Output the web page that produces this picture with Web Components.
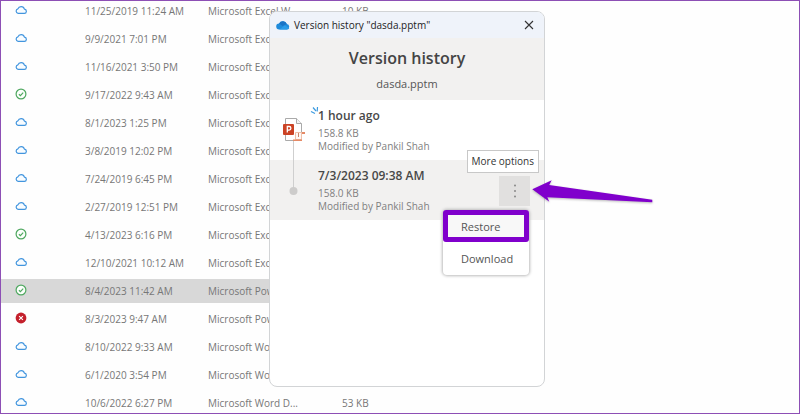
<!DOCTYPE html>
<html lang="en">
<head>
<meta charset="utf-8">
<title>Version history</title>
<style>
    body {
        margin: 0;
        background: #fefefe;
        font-family: "Open Sans", "Noto Sans", sans-serif;
    }
</style>
</head>
<body>
<desktop-view>
    <file-list></file-list>
    <version-dialog slot="window" file="dasda.pptm">
        <version-entry heading="1 hour ago" size="158.8 KB" author="Modified by Pankil Shah" marker="file"></version-entry>
        <version-entry heading="7/3/2023 09:38 AM" size="158.0 KB" author="Modified by Pankil Shah" marker="dot" active>
            <more-options></more-options>
        </version-entry>
    </version-dialog>
    <pointer-arrow slot="window"></pointer-arrow>
</desktop-view>

<script>
const ICONS = {
    cloud: `<svg viewBox="0 0 12 12" role="img" aria-label="Available online"><path d="M3.1 9.4h6a2.1 2.1 0 0 0 .3-4.2A3.4 3.4 0 0 0 2.9 4.900a2.3 2.3 0 0 0 .2 4.5z" fill="#f8fcff" stroke="#4295de" stroke-width="1.2" stroke-linejoin="round"/></svg>`,
    synced: `<svg viewBox="0 0 12 12" role="img" aria-label="Synced"><circle cx="6" cy="6" r="4.9" fill="#fbfffb" stroke="#4fa860" stroke-width="1.2"/><path d="M3.9 6.2l1.5 1.4L8.2 4.7" fill="none" stroke="#4fa860" stroke-width="1.2"/></svg>`,
    error: `<svg viewBox="0 0 12 12" role="img" aria-label="Sync error"><circle cx="6" cy="6" r="5.4" fill="#c4202c"/><path d="M4.1 4.1l3.8 3.8M7.9 4.1L4.1 7.9" stroke="#fff" stroke-width="1.1"/></svg>`
};

const MARKERS = {
    file: `<svg viewBox="0 0 48 60" aria-hidden="true">
        <path d="M23.5 41v19" stroke="#cfcfcf"/>
        <path d="M15.5 18.5h11l5 5v17h-16z" fill="#fff" stroke="#aaa"/>
        <path d="M26.5 18.5v5h5" fill="#f3f3f3" stroke="#aaa"/>
        <rect x="13" y="24" width="11" height="11" rx="1" fill="#cb4224"/>
        <path d="M17.3 32.5v-6h1.8a1.75 1.75 0 0 1 0 3.6h-1.8" fill="none" stroke="#fff" stroke-width="1.3"/>
        <path d="M25.5 32.5h6v7h-6z" fill="#fff8f4" stroke="#f0c0aa"/>
        <path d="M28.5 33v4" stroke="#c8866d"/>
        <path d="M32 32h3v2h-3zM23 39.500h9V41h-9z" fill="#e58a66"/>
        <path d="M47.500 7l-.3 4.500M43 7.500l3 3.500M41 11.500l4 2" stroke="#3d9be0" stroke-width="1.2"/>
    </svg>`,
    dot: `<svg viewBox="0 0 48 60" aria-hidden="true">
        <path d="M23.5 0v28" stroke="#cfcfcf"/>
        <circle cx="23.5" cy="31" r="4" fill="#cdcccb"/>
    </svg>`
};

const FILES = [
    ["cloud", "11/25/2019 11:24 AM", "Microsoft Excel W...", "10 KB"],
    ["cloud", "9/9/2021 7:01 PM", "Microsoft Excel W...", ""],
    ["cloud", "11/16/2021 3:50 PM", "Microsoft Excel W...", ""],
    ["synced", "9/17/2022 9:43 AM", "Microsoft Excel W...", ""],
    ["cloud", "8/1/2023 1:25 PM", "Microsoft Excel W...", ""],
    ["cloud", "3/8/2019 12:02 PM", "Microsoft Excel W...", ""],
    ["cloud", "7/24/2019 6:45 PM", "Microsoft Excel W...", ""],
    ["cloud", "2/27/2019 12:51 PM", "Microsoft Excel W...", ""],
    ["synced", "4/13/2023 6:16 PM", "Microsoft Excel W...", ""],
    ["cloud", "12/10/2021 10:12 AM", "Microsoft Excel W...", ""],
    ["synced", "8/4/2023 11:42 AM", "Microsoft Power...", ""],
    ["error", "8/3/2023 9:47 AM", "Microsoft Power...", ""],
    ["cloud", "8/10/2022 9:33 AM", "Microsoft Word D...", ""],
    ["cloud", "6/1/2020 3:54 PM", "Microsoft Word D...", ""],
    ["cloud", "10/6/2022 6:27 PM", "Microsoft Word D...", "53 KB"]
];
const SELECTED = 10;

class DesktopView extends HTMLElement {
    constructor() {
        super();
        this.attachShadow({ mode: "open" }).innerHTML = `
            <style>
                :host {
                    display: block;
                    position: relative;
                    box-sizing: border-box;
                    height: 100vh;
                    border: 1px solid #8d4fb5;
                    overflow: hidden;
                }
            </style>
            <slot></slot>
            <slot name="window"></slot>
        `;
    }
}

class FileList extends HTMLElement {
    constructor() {
        super();
        const rows = FILES.map(([icon, date, type, size], i) => `
            <tr${i === SELECTED ? ' class="selected"' : ""}>
                <td class="status">${ICONS[icon]}</td>
                <td>${date}</td>
                <td>${type}</td>
                <td>${size}</td>
            </tr>`).join("");
        this.attachShadow({ mode: "open" }).innerHTML = `
            <style>
                :host {
                    display: block;
                    margin-top: -6px;
                    color: #777;
                    font-size: 10px;
                    line-height: 16px;
                }
                table {
                    table-layout: fixed;
                    width: 50%;
                    border-spacing: 0 4px;
                }
                col.status { width: 84px; }
                col.date { width: 123px; }
                col.type { width: 134px; }
                tr { height: 24px; }
                td {
                    padding: 0;
                    white-space: nowrap;
                }
                td.status { padding: 0 0 2px 14px; }
                svg {
                    display: block;
                    width: 12px;
                    height: 12px;
                }
                .selected { background: #d8d8d8; }
            </style>
            <table>
                <colgroup><col class="status"><col class="date"><col class="type"><col></colgroup>
                <tbody>${rows}</tbody>
            </table>
        `;
    }
}

class VersionDialog extends HTMLElement {
    constructor() {
        super();
        const file = this.getAttribute("file") || "";
        this.attachShadow({ mode: "open" }).innerHTML = `
            <style>
                :host {
                    display: block;
                    position: absolute;
                    left: 268px;
                    top: 10px;
                    bottom: 26px;
                    width: 274px;
                    border: 1px solid #d2d4d6;
                    border-radius: 8px;
                    background: #fff;
                }
                .bar {
                    display: flex;
                    align-items: center;
                    gap: 4px;
                    height: 26px;
                    padding: 0 8px 0 6px;
                    border-radius: 7px 7px 0 0;
                    background: #eff3fa;
                    color: #222;
                    font-size: 10px;
                }
                .bar span { flex: 1; }
                .bar svg { display: block; }
                button {
                    padding: 0;
                    border: 0;
                    background: none;
                }
                header {
                    display: flex;
                    flex-direction: column;
                    align-items: center;
                    gap: 4px;
                    height: 54px;
                    padding-top: 8px;
                    background: #f2f1f0;
                    text-align: center;
                }
                h1 {
                    margin: 0;
                    color: #444;
                    font-size: 16px;
                    font-weight: 600;
                    line-height: 24px;
                }
                p {
                    margin: 0;
                    color: #555;
                    font-size: 11px;
                    line-height: 20px;
                }
            </style>
            <div class="bar">
                <svg width="14" height="10" viewBox="0 0 14 10" aria-hidden="true">
                    <path d="M3.3 9.5a3 3 0 0 1-.2-6A4.200 4.200 0 0 1 10.800 3.900a2.850 2.850 0 0 1 .2 5.600z" fill="#1f8bdb"/>
                    <path d="M3.1 3.5A4.200 4.200 0 0 1 10.800 3.900L6.5 6z" fill="#1a74c6"/>
                    <path d="M3.3 9.5L9 5.200l4.300 3.100a2.800 2.800 0 0 1-2.300 1.200z" fill="#2b9ce8"/>
                </svg>
                <span>Version history "${file}"</span>
                <button aria-label="Close">
                    <svg width="14" height="14" viewBox="0 0 14 14"><path d="M3 3l8 8M11 3l-8 8" stroke="#333" stroke-width="1.1"/></svg>
                </button>
            </div>
            <header>
                <h1>Version history</h1>
                <p>${file}</p>
            </header>
            <slot></slot>
        `;
    }
}

class VersionEntry extends HTMLElement {
    constructor() {
        super();
        this.attachShadow({ mode: "open" }).innerHTML = `
            <style>
                :host {
                    display: grid;
                    grid-template-columns: 48px 1fr auto;
                    min-height: 60px;
                }
                :host([active]) { background: #f2f1f0; }
                svg {
                    display: block;
                    width: 48px;
                    height: 60px;
                    overflow: visible;
                }
                .text {
                    padding: 7px 0;
                    color: #808080;
                    font-size: 10px;
                    line-height: 13px;
                }
                h2 {
                    margin: 0 0 2px;
                    color: #484848;
                    font-size: 12px;
                    font-weight: 600;
                    line-height: 18px;
                }
                p { margin: 0; }
            </style>
            ${MARKERS[this.getAttribute("marker")] || ""}
            <div class="text">
                <h2>${this.getAttribute("heading")}</h2>
                <p>${this.getAttribute("size")}</p>
                <p>${this.getAttribute("author")}</p>
            </div>
            <slot></slot>
        `;
    }
}

class MoreOptions extends HTMLElement {
    constructor() {
        super();
        this.attachShadow({ mode: "open" }).innerHTML = `
            <style>
                :host {
                    display: block;
                    position: relative;
                    padding: 16px 14px 0 0;
                }
                button {
                    display: block;
                    margin: 0;
                    border: 0;
                    padding: 0;
                    font: inherit;
                    color: inherit;
                }
                .trigger {
                    width: 31px;
                    height: 30px;
                    background: #e1e0df;
                }
                .trigger svg {
                    display: block;
                    margin: auto;
                }
                .tip {
                    position: absolute;
                    right: 5px;
                    bottom: 47px;
                    padding: 0 4px;
                    border: 1px solid #c8c8c8;
                    background: #fff;
                    color: #333;
                    font-size: 10px;
                    line-height: 21px;
                    white-space: nowrap;
                }
                .menu {
                    position: absolute;
                    top: 50px;
                    right: 15px;
                    width: 86px;
                    border-radius: 4px;
                    background: #fff;
                    box-shadow: 0 0 3px 1px #bbb;
                    color: #555;
                    font-size: 11px;
                }
                .menu button {
                    box-sizing: border-box;
                    width: 100%;
                    height: 33px;
                    padding-left: 18px;
                    border-radius: 4px;
                    background: none;
                    text-align: left;
                }
                .menu .marked {
                    height: 32px;
                    padding-left: 13px;
                    border: 5px solid #8000cc;
                    border-radius: 3px;
                    background: #f8f8f8;
                }
            </style>
            <button class="trigger" aria-label="More options" aria-haspopup="menu" aria-expanded="true">
                <svg width="4" height="16" viewBox="0 0 4 16"><g fill="#888"><circle cx="2" cy="2.5" r="1"/><circle cx="2" cy="8" r="1"/><circle cx="2" cy="13.5" r="1"/></g></svg>
            </button>
            <div class="tip" role="tooltip">More options</div>
            <div class="menu" role="menu">
                <button class="marked" role="menuitem">Restore</button>
                <button role="menuitem">Download</button>
            </div>
        `;
    }
}

class PointerArrow extends HTMLElement {
    constructor() {
        super();
        this.attachShadow({ mode: "open" }).innerHTML = `
            <style>
                :host {
                    display: block;
                    position: absolute;
                    left: 530px;
                    top: 177px;
                    filter: drop-shadow(0 1px 1px #0004);
                }
                svg { display: block; }
            </style>
            <svg width="124" height="26" viewBox="0 0 124 26" aria-hidden="true">
                <path d="M1.300 11.300L20.700 2.300 18.200 7 121.300 21.700v2.600L16.300 19.300l2 4.500z" fill="#8000cc"/>
            </svg>
        `;
    }
}

customElements.define("desktop-view", DesktopView);
customElements.define("file-list", FileList);
customElements.define("version-dialog", VersionDialog);
customElements.define("version-entry", VersionEntry);
customElements.define("more-options", MoreOptions);
customElements.define("pointer-arrow", PointerArrow);
</script>
</body>
</html>
